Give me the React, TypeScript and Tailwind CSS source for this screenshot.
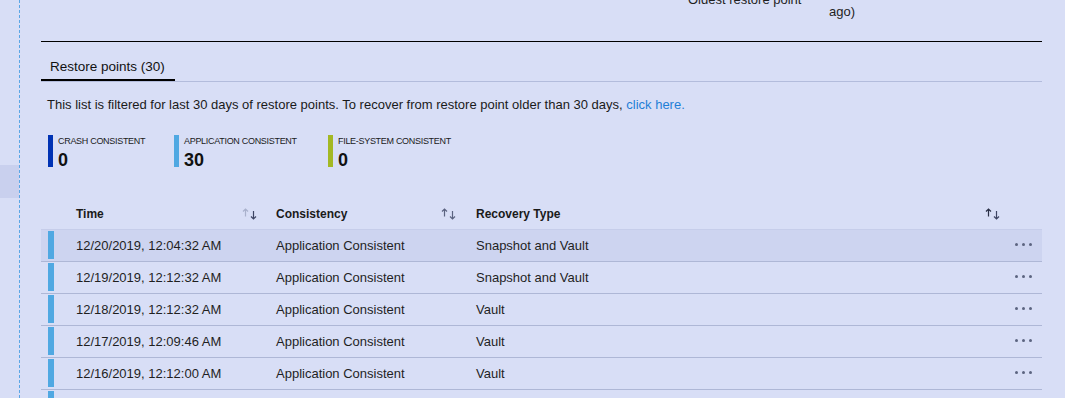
import React from 'react';

type SortColors = { up: string; down: string };

const rows = [
	{ time: '12/20/2019, 12:04:32 AM', consistency: 'Application Consistent', type: 'Snapshot and Vault' },
	{ time: '12/19/2019, 12:12:32 AM', consistency: 'Application Consistent', type: 'Snapshot and Vault' },
	{ time: '12/18/2019, 12:12:32 AM', consistency: 'Application Consistent', type: 'Vault' },
	{ time: '12/17/2019, 12:09:46 AM', consistency: 'Application Consistent', type: 'Vault' },
	{ time: '12/16/2019, 12:12:00 AM', consistency: 'Application Consistent', type: 'Vault' },
	{ time: '12/15/2019, 12:11:08 AM', consistency: 'Application Consistent', type: 'Vault' },
];

function SortIcon({ up, down }: SortColors) {
	return (
		<svg width="16" height="12" viewBox="0 0 16 12" fill="none">
			{/* up arrow */}
			<path d="M3.5 8.5V1M1 3.5L3.5 1L6 3.5" stroke={up} strokeWidth="1.2" />
			{/* down arrow */}
			<path d="M11.5 3v8M9 8.5l2.5 2.5L14 8.5" stroke={down} strokeWidth="1.2" />
		</svg>
	);
}

function LegendItem({ color, label, value, width }: { color: string; label: string; value: string; width: string }) {
	return (
		<div className={`flex items-start gap-[5px] h-[32px] ${width}`}>
			<div className={`w-[5px] h-[32px] shrink-0 ${color}`} />
			<div className="flex flex-col">
				<div className="text-[9px] leading-[12px] tracking-[-0.3px] text-[#1a1a1a] whitespace-nowrap">{label}</div>
				<div className="text-[18px] leading-[26px] font-bold text-[#111]">{value}</div>
			</div>
		</div>
	);
}

export default function App() {
	return (
		<div className="w-[1065px] h-[398px] overflow-hidden bg-[#d8def6] flex font-['Liberation_Sans',Arial,sans-serif] text-[#1f1f1f]">
			{/* Left blade strip */}
			<div className="w-[19px] shrink-0">
				<div className="mt-[165px] h-[33px] bg-[#c9d0ee]" />
			</div>

			{/* Main blade content */}
			<div className="flex-1 border-l border-dashed border-[#5aa6e6] pl-[21px] pr-[23px]">
				{/* Summary (scrolled, clipped) */}
				<div className="h-[42px] border-b border-black overflow-hidden">
					<div className="flex -mt-[18px] text-[13px] leading-[20px]">
						<div className="ml-[647px] w-[141px] mt-[8px] whitespace-nowrap">Oldest restore point</div>
						<div className="flex flex-col">
							<span className="whitespace-nowrap">12/16/2019, 12:12:00 AM (4 days</span>
							<span>ago)</span>
						</div>
					</div>
				</div>

				{/* Tabs */}
				<div className="flex border-b border-[#b3bcdc]">
					<div className="w-[134px] h-[39px] pt-[16px] pl-[9px] border-b-2 border-black text-[13.5px] leading-[18px] text-[#111]">
						Restore points (30)
					</div>
				</div>

				{/* Info text */}
				<p className="pt-[14px] pl-[6px] text-[13px] leading-[17px] text-[#1a1a1a] whitespace-nowrap">
					This list is filtered for last 30 days of restore points. To recover from restore point older than 30 days,{' '}
					<span className="text-[#1f7ed6]">click here.</span>
				</p>

				{/* Legend */}
				<div className="flex mt-[22px] pl-[7px] h-[32px]">
					<LegendItem color="bg-[#0032b4]" label="CRASH CONSISTENT" value="0" width="w-[126px]" />
					<LegendItem color="bg-[#50a8e2]" label="APPLICATION CONSISTENT" value="30" width="w-[154px]" />
					<LegendItem color="bg-[#a3b824]" label="FILE-SYSTEM CONSISTENT" value="0" width="w-[200px]" />
				</div>

				{/* Table */}
				<div className="mt-[31px]">
					<div className="grid grid-cols-[35px_200px_200px_1fr_39px] h-[32px] items-center border-b border-[#c6cdea] text-[12px] font-bold text-[#1a1a1a]">
						<div />
						<div className="flex items-center justify-between pr-[18px]">
							<span>Time</span>
							<SortIcon up="#a9b1cc" down="#3d4463" />
						</div>
						<div className="flex items-center justify-between pr-[19px]">
							<span>Consistency</span>
							<SortIcon up="#5b6380" down="#5b6380" />
						</div>
						<div className="flex items-center justify-between pr-[2px]">
							<span>Recovery Type</span>
							<SortIcon up="#2a2f45" down="#3d4463" />
						</div>
						<div />
					</div>

					{rows.map((r, i) => (
						<div
							key={r.time}
							className={`grid grid-cols-[35px_200px_200px_1fr_39px] h-[32px] items-center border-b border-[#aeb7d6] text-[13px] ${
								i === 0 ? 'bg-[#cdd4f0]' : ''
							}`}
						>
							<div className="h-full flex items-start pt-[1px] pl-[7px]">
								<div className="w-[6px] h-[28px] bg-[#50a8e2]" />
							</div>
							<div className="whitespace-nowrap">{r.time}</div>
							<div className="whitespace-nowrap">{r.consistency}</div>
							<div className="whitespace-nowrap">{r.type}</div>
							<div className="flex items-center gap-[4px] pl-[12px] -mt-[2px]">
								<span className="w-[3px] h-[3px] rounded-full bg-[#5c6480]" />
								<span className="w-[3px] h-[3px] rounded-full bg-[#5c6480]" />
								<span className="w-[3px] h-[3px] rounded-full bg-[#5c6480]" />
							</div>
						</div>
					))}
				</div>
			</div>
		</div>
	);
}
